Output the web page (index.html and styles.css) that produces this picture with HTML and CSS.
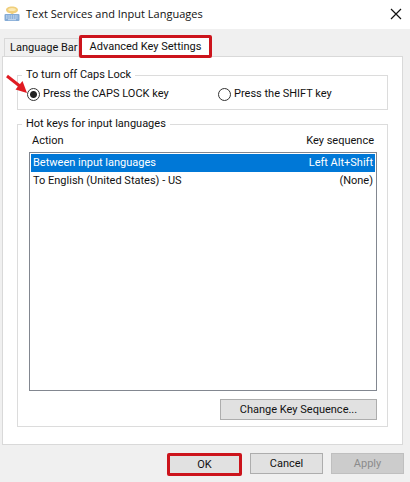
FILE: index.html
```
<!DOCTYPE html>
<html lang="en">
<head>
    <meta charset="UTF-8">
    <meta name="viewport" content="width=device-width, initial-scale=1.0">
    <title>Text Services and Input Languages</title>
    <link rel="stylesheet" href="styles.css">
</head>
<body>

<header class="titlebar">
    <svg class="app-icon" width="16" height="16" viewBox="0 0 16 16" aria-hidden="true">
        <path d="M8 0.500C4.500 0.500 2 2 2 4C2 6 4.500 7.300 7 7.400L9 9.500L9.500 7.300C12 7 14 5.900 14 4C14 2 11.500 0.500 8 0.500Z" fill="#f0cf7c"/>
        <ellipse cx="8" cy="3.500" rx="3.800" ry="1.600" fill="#fbe9b4"/>
        <rect x="0.500" y="8" width="15" height="7" rx="1" fill="#84abd6"/>
        <path d="M2 10H14M2 12H14" stroke="#dce9f6" stroke-width="1" stroke-dasharray="1.500 0.800"/>
        <path d="M4 13.700H12" stroke="#dce9f6" stroke-width="0.800"/>
    </svg>
    <h1>Text Services and Input Languages</h1>
    <button type="button" class="close" aria-label="Close">
        <svg width="12" height="12" viewBox="0 0 12 12"><path d="M1 1L11 11M11 1L1 11" stroke="#111" stroke-width="1.200" fill="none"/></svg>
    </button>
</header>

<main class="dialog">
    <div class="tabs" role="tablist">
        <button type="button" class="tab" role="tab" aria-selected="false">Language Bar</button>
        <button type="button" class="tab active marked" role="tab" aria-selected="true">Advanced Key Settings</button>
    </div>

    <div class="panel" role="tabpanel">
        <fieldset class="group caps">
            <legend>To turn off Caps Lock</legend>
            <svg class="arrow" width="24" height="22" viewBox="0 0 24 22" aria-hidden="true">
                <path d="M2 2L16 13" stroke="#e01b22" stroke-width="3" fill="none"/>
                <path d="M22 19L10.500 15.500L17.500 7Z" fill="#e01b22"/>
            </svg>
            <label class="option"><input type="radio" name="caps" checked>Press the CAPS LOCK key</label>
            <label class="option"><input type="radio" name="caps">Press the SHIFT key</label>
        </fieldset>

        <fieldset class="group hot">
            <legend>Hot keys for input languages</legend>
            <table class="keys">
                <thead>
                    <tr><th>Action</th><th>Key sequence</th></tr>
                </thead>
                <tbody>
                    <tr class="selected"><td>Between input languages</td><td>Left Alt+Shift</td></tr>
                    <tr><td>To English (United States) - US</td><td>(None)</td></tr>
                </tbody>
            </table>
            <button type="button" class="button change">Change Key Sequence...</button>
        </fieldset>
    </div>

    <div class="actions">
        <button type="button" class="button marked">OK</button>
        <button type="button" class="button">Cancel</button>
        <button type="button" class="button" disabled>Apply</button>
    </div>
</main>

</body>
</html>
```
FILE: styles.css
```
* {
    box-sizing: border-box;
}
body {
    margin: 0;
    min-height: 100vh;
    display: flex;
    flex-direction: column;
    background-color: #f0f0f0;
    color: #111;
    font-family: Roboto, "Liberation Sans", sans-serif;
    font-size: 11px;
    line-height: 16px;
}
button {
    font: inherit;
    color: inherit;
    padding: 0;
}
.titlebar {
    display: flex;
    align-items: center;
    height: 29px;
    padding: 0 8px 2px 4px;
    background-color: #fff;
}
.titlebar h1 {
    flex: 1;
    margin: 0 0 0 6px;
    font-family: "Open Sans", "Noto Sans", sans-serif;
    font-size: 11px;
    font-weight: normal;
}
.close {
    display: flex;
    border: none;
    background: none;
}
.dialog {
    flex: 1;
    display: flex;
    flex-direction: column;
    padding: 6px 6px 7px 2px;
}
.tabs {
    display: flex;
    align-items: flex-end;
    height: 21px;
    padding-left: 2px;
}
.tab {
    height: 18px;
    width: 75px;
    padding-left: 5px;
    border: 1px solid #d9d9d9;
    border-bottom: none;
    background-color: #f0f0f0;
    text-align: left;
    white-space: nowrap;
}
.tab.active {
    position: relative;
    width: 133px;
    height: 23px;
    margin-bottom: -2px;
    padding: 0;
    background-color: #fff;
    text-align: center;
}
.marked,
.tab.marked {
    border: 3px solid #cc141c;
    border-radius: 2px;
}
.panel {
    flex: 1;
    display: flex;
    flex-direction: column;
    gap: 6px;
    margin-right: 1px;
    padding: 10px 14px 17px;
    border: 1px solid #d9d9d9;
    background-color: #fff;
}
.group {
    min-width: 0;
    margin: 0;
    border: 1px solid #dcdcdc;
}
.group legend {
    padding: 0 4px;
}
.caps {
    position: relative;
    display: grid;
    grid-template-columns: 191px 1fr;
    padding: 3px 4px 7px;
}
.option {
    display: flex;
    align-items: center;
    gap: 3px;
    margin-left: 5px;
}
.option input {
    appearance: none;
    width: 13px;
    height: 13px;
    margin: 0;
    border: 1px solid #333;
    border-radius: 50%;
    background-color: #fff;
}
.option input:checked {
    background-image: radial-gradient(circle, #222 3px, transparent 4px);
}
.arrow {
    position: absolute;
    left: -13px;
    top: -9px;
}
.hot {
    flex: 1;
    padding: 0 4px 6px;
}
.keys {
    display: block;
    margin: 0 6px 0 7px;
}
.keys thead {
    display: block;
    padding: 1px 3px 3px;
}
.keys tbody {
    display: block;
    min-height: 239px;
    padding: 1px;
    border: 1px solid #828790;
}
.keys tr {
    display: flex;
    justify-content: space-between;
}
.keys th,
.keys td {
    padding: 0;
    font-weight: normal;
}
.keys td {
    padding: 1px 2px;
}
.keys .selected {
    background-color: #0078d7;
    color: #fff;
}
.button {
    width: 73px;
    height: 21px;
    border: 1px solid #adadad;
    background-color: #e1e1e1;
}
.button.marked {
    width: 75px;
    height: 23px;
    border: 3px solid #cc141c;
    line-height: 15px;
}
.button:disabled {
    border-color: #bfbfbf;
    background-color: #ccc;
    color: #8b8b8b;
}
.change {
    display: block;
    width: 157px;
    margin: 8px 6px 0 auto;
}
.actions {
    display: flex;
    justify-content: flex-end;
    gap: 8px;
    padding-top: 8px;
}
```
